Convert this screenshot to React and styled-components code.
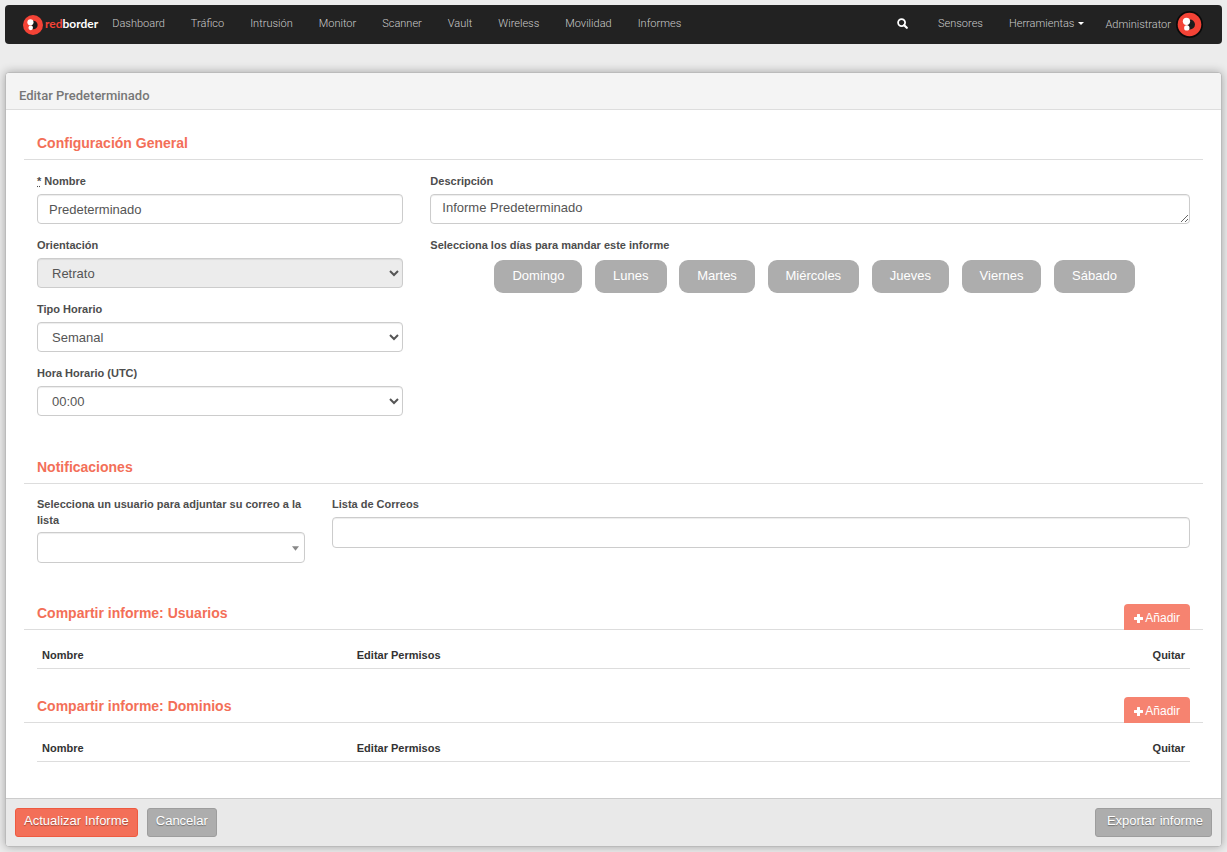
import styled, {createGlobalStyle} from 'styled-components'
import {useState} from 'react'

const GlobalStyle = createGlobalStyle`
  * {
    box-sizing: border-box;
  }
  body {
    margin: 0;
    background-color: #ececec;
    color: #4d4d4d;
    font-family: "Liberation Sans", Arial, sans-serif;
    font-size: 13px;
    line-height: 16px;
  }
  button, input, select, textarea {
    font-family: inherit;
  }
`

const Page = styled.div`
  padding: 5px;
`

const Navbar = styled.nav`
  display: flex;
  align-items: center;
  min-height: 39px;
  padding: 0 19px 0 18px;
  margin-bottom: 28px;
  border-radius: 4px;
  background-color: #222;
  font-family: Roboto, sans-serif;
  font-size: 11px;
  font-weight: 300;
`

const Brand = styled.a`
  display: flex;
  align-items: center;
  gap: 2px;
  margin-right: 14px;
  color: white;
  font-family: Lato, sans-serif;
  font-size: 12px;
  font-weight: 700;
  text-decoration: none;
`

const BrandName = styled.div`
  padding-bottom: 2px;
  span {
    color: #f44336;
  }
`

const NavLinks = styled.div`
  display: flex;
  align-items: center;
  gap: 26px;
  padding-bottom: 2px;
  margin-left: ${props => props.$right ? 'auto' : '0'};
`

const NavLink = styled.a`
  display: flex;
  align-items: center;
  gap: 4px;
  color: #ccc;
  text-decoration: none;
  svg {
    color: white;
  }
`

const SearchButton = styled.button`
  display: flex;
  padding: 0;
  margin-right: 4px;
  border: 0;
  background: none;
  color: white;
`

const UserLink = styled(NavLink)`
  gap: 5px;
  margin-left: 21px;
`

const Panel = styled.form`
  border: 1px solid #bbb;
  border-radius: 4px;
  background-color: white;
  box-shadow: 0 0 10px rgba(0, 0, 0, 0.3);
`

const PanelHeader = styled.header`
  padding: 13px 13px 3px;
  border-bottom: 1px solid #ddd;
  border-radius: 3px 3px 0 0;
  background-color: #f4f4f4;
`

const PanelTitle = styled.h1`
  margin: 0;
  color: #777;
  font-family: Roboto, sans-serif;
  font-size: 13px;
  font-weight: 500;
  line-height: 20px;
`

const PanelBody = styled.div`
  padding: 23px 18px 36px;
`

const Section = styled.section`
  margin-bottom: ${props => props.$gap || 0}px;
`

const SectionHeader = styled.div`
  position: relative;
  padding: 0 13px 6px;
  border-bottom: 1px solid #ddd;
`

const SectionTitle = styled.h2`
  margin: 0;
  color: #f36f58;
  font-size: 14px;
  line-height: 20px;
`

const AddButton = styled.button`
  position: absolute;
  right: 13px;
  bottom: -1px;
  display: flex;
  align-items: center;
  gap: 2px;
  height: 26px;
  padding: 2px 10px 0;
  border: 0;
  border-radius: 4px 4px 0 0;
  background-color: #f68370;
  color: white;
  font-size: 12px;
`

const Fields = styled.div`
  display: grid;
  grid-template-columns: repeat(12, 1fr);
  column-gap: 27px;
  padding: ${props => props.$top}px 13px 0;
`

const Column = styled.div`
  grid-column: span ${props => props.$span};
  display: flex;
  flex-direction: column;
  gap: 13px;
  min-width: 0;
`

const Field = styled.div`
  display: flex;
  flex-direction: column;
  gap: ${props => props.$tight ? 4 : 5}px;
`

const Label = styled.label`
  font-size: 11px;
  font-weight: bold;
  line-height: 16px;
`

const controlStyles = `
  width: 100%;
  border: 1px solid #ccc;
  border-radius: 4px;
  background-color: white;
  box-shadow: inset 0 1px 1px rgba(0, 0, 0, 0.075);
  color: #555;
  font-size: 13px;
`

const TextInput = styled.input`
  ${controlStyles}
  height: ${props => props.$tall ? 31 : 30}px;
  padding: 4px 11px;
`

const TextArea = styled.textarea`
  ${controlStyles}
  display: block;
  height: 30px;
  padding: 5px 11px;
  line-height: 16px;
  overflow: hidden;
  resize: vertical;
`

const Select = styled.select`
  ${controlStyles}
  height: 30px;
  padding: 4px 0 4px 10px;
  &:disabled {
    background-color: #ececec;
    opacity: 1;
  }
`

const UserSelectWrapper = styled.div`
  position: relative;
  svg {
    position: absolute;
    right: 6px;
    top: 14px;
    pointer-events: none;
  }
`

const UserSelect = styled.select`
  ${controlStyles}
  display: block;
  height: 31px;
  padding: 4px 24px 4px 10px;
  appearance: none;
`

const Days = styled.div`
  padding-top: 2px;
  text-align: center;
`

const DayButton = styled.button`
  height: 33px;
  padding: 0 18px 2px;
  margin-left: 9px;
  border: 0;
  border-radius: 9px;
  background-color: ${props => props['aria-pressed'] ? '#f36f58' : '#adadad'};
  color: white;
  font-size: 13px;
`

const TableWrapper = styled.div`
  padding: 13px 13px 0;
`

const Table = styled.table`
  width: 100%;
  border-collapse: collapse;
  table-layout: fixed;
`

const Th = styled.th`
  width: ${props => props.$width || 'auto'};
  padding: 4px 5px 5px;
  border-bottom: 1px solid #ddd;
  color: #333;
  font-size: 11px;
  line-height: 16px;
  text-align: ${props => props.$right ? 'right' : 'left'};
`

const PanelFooter = styled.footer`
  display: flex;
  gap: 9px;
  padding: 9px;
  border-top: 1px solid #ccc;
  border-radius: 0 0 3px 3px;
  background-color: #e9e9e9;
`

const Button = styled.button`
  height: 29px;
  padding: 0 8px 4px;
  border: 1px solid ${props => props.$primary ? '#ee5a40' : '#9d9d9d'};
  border-radius: 3px;
  background-color: ${props => props.$primary ? '#f36f58' : '#adadad'};
  color: white;
  font-size: 13px;
  text-shadow: 0 1px 1px rgba(0, 0, 0, 0.35);
`

const ExportButton = styled(Button)`
  padding-left: 11px;
  margin-left: auto;
`

const links = ['Dashboard', 'Tráfico', 'Intrusión', 'Monitor', 'Scanner', 'Vault', 'Wireless', 'Movilidad', 'Informes']
const weekDays = ['Domingo', 'Lunes', 'Martes', 'Miércoles', 'Jueves', 'Viernes', 'Sábado']

function LogoMark({size, ring}) {
  return (
    <svg width={size} height={size} viewBox={ring ? '-2 -2 32 32' : '0 0 28 28'} aria-hidden="true">
      {ring && <circle cx="14" cy="14" r="16" fill="#0a0a0a"/>}
      <circle cx="14" cy="14" r="14" fill="#f44336"/>
      <path d="M12 8h2.500a6 6 0 0 1 0 12H12z" fill="#1c1c1c"/>
      <circle cx="10.400" cy="10.200" r="4.300" fill="white"/>
      <circle cx="10.800" cy="18" r="3.200" fill="white"/>
    </svg>
  )
}

function SearchIcon() {
  return (
    <svg width="11" height="11" viewBox="0 0 11 11" fill="none" stroke="currentColor" strokeWidth="1.8" aria-hidden="true">
      <circle cx="4.600" cy="4.600" r="3.500"/>
      <path d="M7.200 7.200L9.800 9.800" strokeWidth="2.200" strokeLinecap="round"/>
    </svg>
  )
}

function PlusIcon() {
  return (
    <svg width="9" height="9" viewBox="0 0 9 9" aria-hidden="true">
      <path d="M3.500 0h2q.5 0 .5.5V3h2.500q.5 0 .5.5v2q0 .5-.5.5H6v2.500q0 .5-.5.5h-2q-.5 0-.5-.5V6H.5Q0 6 0 5.500v-2Q0 3 .5 3H3V.5Q3 0 3.500 0z" fill="currentColor"/>
    </svg>
  )
}

function ShareSection({title, gap}) {
  return (
    <Section $gap={gap}>
      <SectionHeader>
        <SectionTitle>{title}</SectionTitle>
        <AddButton type="button"><PlusIcon/>Añadir</AddButton>
      </SectionHeader>
      <TableWrapper>
        <Table>
          <thead>
            <tr>
              <Th $width="27.3%">Nombre</Th>
              <Th>Editar Permisos</Th>
              <Th $right>Quitar</Th>
            </tr>
          </thead>
        </Table>
      </TableWrapper>
    </Section>
  )
}

function App() {
  const [name, setName] = useState('Predeterminado')
  const [description, setDescription] = useState('Informe Predeterminado')
  const [emails, setEmails] = useState('')
  const [selectedDays, setSelectedDays] = useState([])

  const dayClickHandler = (day) => {
    setSelectedDays(selectedDays.includes(day) ? selectedDays.filter(d => d !== day) : [...selectedDays, day])
  }

  return (
    <Page>
      <GlobalStyle/>
      <Navbar>
        <Brand href="#">
          <LogoMark size={20}/>
          <BrandName><span>red</span>border</BrandName>
        </Brand>
        <NavLinks>
          {links.map(link => <NavLink href="#" key={link}>{link}</NavLink>)}
        </NavLinks>
        <NavLinks $right>
          <SearchButton type="button" aria-label="Buscar"><SearchIcon/></SearchButton>
          <NavLink href="#">Sensores</NavLink>
          <NavLink href="#">
            Herramientas
            <svg width="6" height="3" viewBox="0 0 6 3"><path d="M0 0h6L3 3z" fill="currentColor"/></svg>
          </NavLink>
        </NavLinks>
        <UserLink href="#">Administrator<LogoMark size={27} ring/></UserLink>
      </Navbar>

      <Panel onSubmit={e => e.preventDefault()}>
        <PanelHeader>
          <PanelTitle>Editar Predeterminado</PanelTitle>
        </PanelHeader>
        <PanelBody>
          <Section $gap={41}>
            <SectionHeader>
              <SectionTitle>Configuración General</SectionTitle>
            </SectionHeader>
            <Fields $top={13}>
              <Column $span={4}>
                <Field>
                  <Label htmlFor="name"><abbr title="requerido">*</abbr> Nombre</Label>
                  <TextInput id="name" value={name} onChange={e => setName(e.target.value)}/>
                </Field>
                <Field>
                  <Label htmlFor="orientation">Orientación</Label>
                  <Select id="orientation" disabled><option>Retrato</option></Select>
                </Field>
                <Field>
                  <Label htmlFor="schedule">Tipo Horario</Label>
                  <Select id="schedule"><option>Semanal</option></Select>
                </Field>
                <Field>
                  <Label htmlFor="hour">Hora Horario (UTC)</Label>
                  <Select id="hour"><option>00:00</option></Select>
                </Field>
              </Column>
              <Column $span={8}>
                <Field>
                  <Label htmlFor="description">Descripción</Label>
                  <TextArea id="description" value={description} onChange={e => setDescription(e.target.value)}/>
                </Field>
                <Field role="group" aria-labelledby="days">
                  <Label as="span" id="days">Selecciona los días para mandar este informe</Label>
                  <Days>
                    {weekDays.map(day => (
                      <span key={day}>
                        <DayButton
                          type="button"
                          aria-pressed={selectedDays.includes(day)}
                          onClick={() => dayClickHandler(day)}
                        >
                          {day}
                        </DayButton>{' '}
                      </span>
                    ))}
                  </Days>
                </Field>
              </Column>
            </Fields>
          </Section>

          <Section $gap={40}>
            <SectionHeader>
              <SectionTitle>Notificaciones</SectionTitle>
            </SectionHeader>
            <Fields $top={12}>
              <Column $span={3}>
                <Field $tight>
                  <Label htmlFor="user">Selecciona un usuario para adjuntar su correo a la lista</Label>
                  <UserSelectWrapper>
                    <UserSelect id="user"><option></option></UserSelect>
                    <svg width="7" height="5" viewBox="0 0 8 5"><path d="M0 0h8L4 5z" fill="#888"/></svg>
                  </UserSelectWrapper>
                </Field>
              </Column>
              <Column $span={9}>
                <Field>
                  <Label htmlFor="emails">Lista de Correos</Label>
                  <TextInput id="emails" $tall value={emails} onChange={e => setEmails(e.target.value)}/>
                </Field>
              </Column>
            </Fields>
          </Section>

          <ShareSection title="Compartir informe: Usuarios" gap={27}/>
          <ShareSection title="Compartir informe: Dominios"/>
        </PanelBody>
        <PanelFooter>
          <Button $primary>Actualizar Informe</Button>
          <Button type="button">Cancelar</Button>
          <ExportButton type="button">Exportar informe</ExportButton>
        </PanelFooter>
      </Panel>
    </Page>
  )
}

export default App
